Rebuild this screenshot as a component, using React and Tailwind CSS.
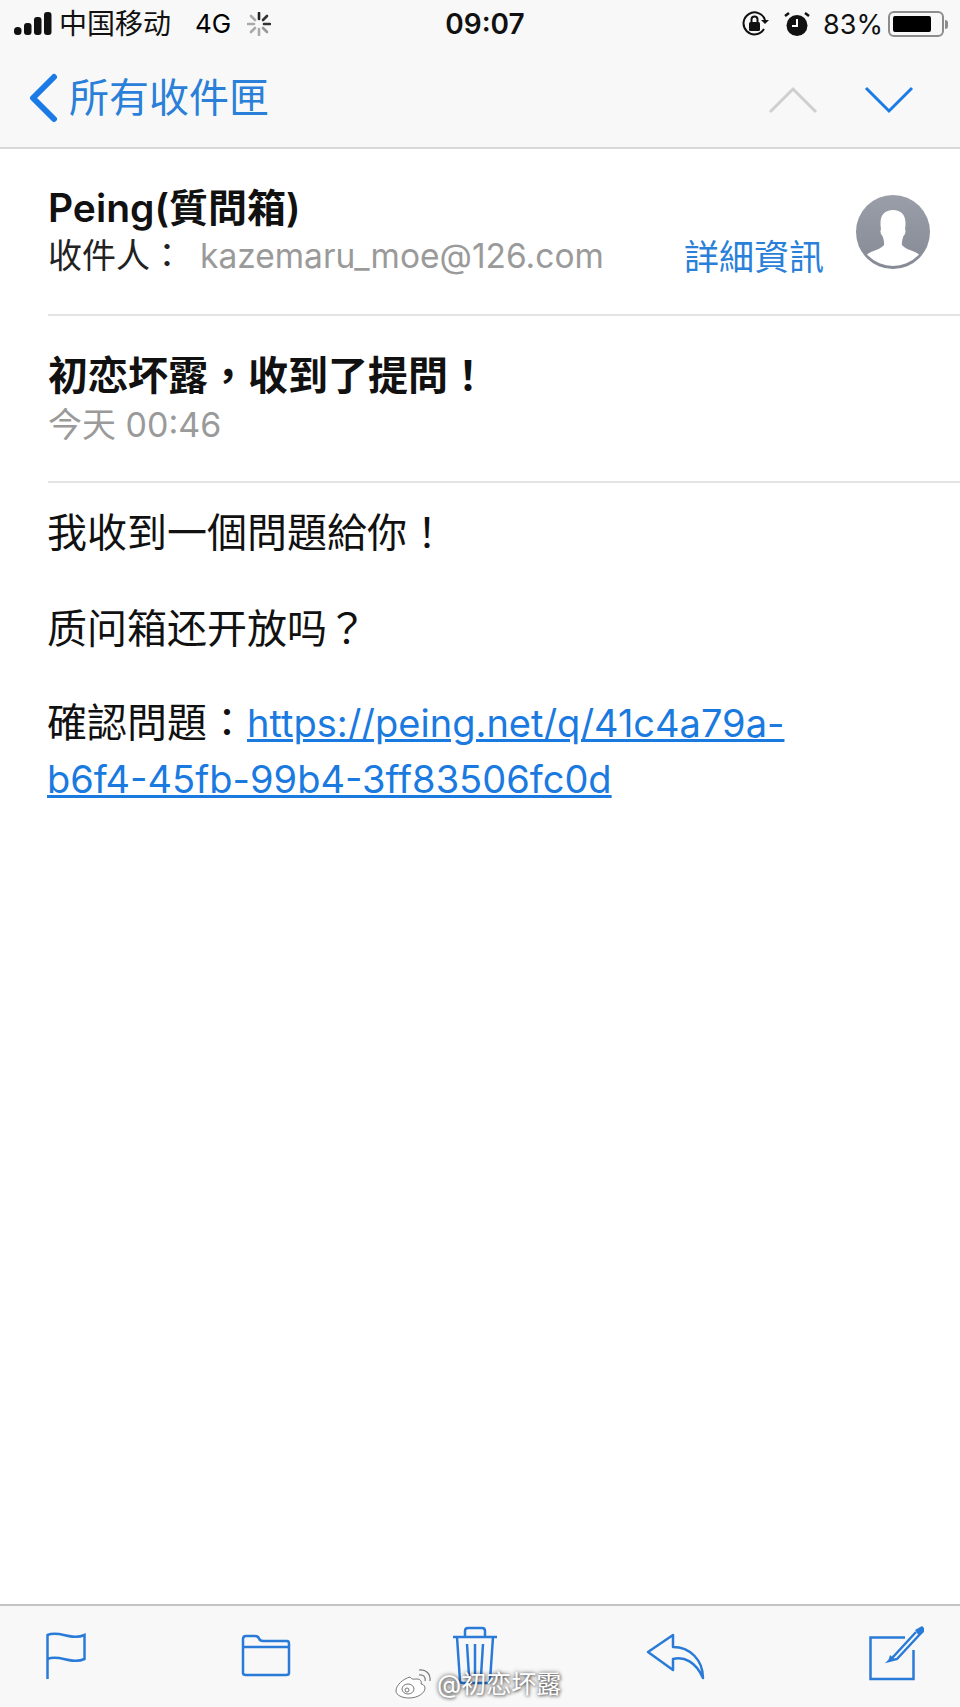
const sans = "font-['Inter','Noto_Sans_CJK_TC',sans-serif]";

function Signal() {
  return (
    <svg width="40" height="24" viewBox="0 0 40 24" className="shrink-0">
      <rect x="0" y="15" width="7.5" height="8" rx="3.5" fill="#111" />
      <rect x="10" y="11" width="7.5" height="12" rx="3" fill="#111" />
      <rect x="20" y="5" width="7.5" height="18" rx="3" fill="#111" />
      <rect x="30" y="0" width="7.5" height="23" rx="3" fill="#111" />
    </svg>
  );
}

function Spinner() {
  const lines = [
    [12, 1, 12, 7, '#222'],
    [20, 4, 16, 8, '#333'],
    [23, 12, 17, 12, '#333'],
    [20, 20, 16, 16, '#999'],
    [12, 23, 12, 17, '#aaa'],
    [4, 20, 8, 16, '#aaa'],
    [1, 12, 7, 12, '#aaa'],
    [4, 4, 8, 8, '#aaa'],
  ];
  return (
    <svg width="24" height="24" viewBox="0 0 24 24">
      {lines.map(([a, b, c, d, col], i) => (
        <line key={i} x1={a} y1={b} x2={c} y2={d} stroke={col} strokeWidth="2.6" strokeLinecap="round" />
      ))}
    </svg>
  );
}

function StatusBar() {
  return (
    <div className={`flex h-12 items-center pl-[14px] pr-3 text-black ${sans}`}>
      <div className="flex w-[430px] items-center">
        <Signal />
        <span className="ml-[5px] text-[28px] leading-none text-[#111]">中国移动</span>
        <span className="ml-[24px] text-[26px] leading-none">4G</span>
        <span className="ml-[16px] flex"><Spinner /></span>
      </div>
      <div className="w-[82px] text-center text-[28px] font-semibold leading-none text-[#111]">09:07</div>
      <div className="flex flex-1 items-center justify-end">
        <svg width="28" height="28" viewBox="0 0 28 28">
          <path d="M23 19a11 11 0 1 1 1-9" fill="none" stroke="#111" strokeWidth="2" />
          <path d="M20 10l4 4 4-4z" fill="#111" />
          <rect x="8" y="12" width="11" height="9" rx="1.5" fill="#111" />
          <path d="M10.5 12V9.5a3 3 0 0 1 6 0V12" fill="none" stroke="#111" strokeWidth="2" />
        </svg>
        <svg width="26" height="26" viewBox="0 0 26 26" className="ml-[15px]">
          <circle cx="13" cy="14.5" r="10.5" fill="#111" />
          <path d="M13 8v7H8" fill="none" stroke="#fff" strokeWidth="2" />
          <path d="M1 5l4-3M25 5l-4-3" stroke="#111" strokeWidth="2.5" />
        </svg>
        <span className="ml-[13px] text-[27px] leading-none text-[#111]">83%</span>
        <div className="ml-[5px] flex items-center">
          <div className="h-[26px] w-[56px] rounded-[6px] border-2 border-[#8c8c8c] p-[3px]">
            <div className="h-full w-[83%] rounded-[2px] bg-black" />
          </div>
          <div className="ml-[1px] h-[9px] w-[3px] rounded-r-full bg-[#8c8c8c]" />
        </div>
      </div>
    </div>
  );
}

function NavBar() {
  return (
    <div className="flex h-[101px] items-center justify-between border-b-2 border-[#d9d9d9] pl-[28px] pr-[46px]">
      <div className="flex items-center">
        <svg width="30" height="50" viewBox="0 0 30 50">
          <path d="M26 4L5 25l21 21" fill="none" stroke="#1a7ae6" strokeWidth="6" strokeLinecap="round" strokeLinejoin="round" />
        </svg>
        <span className="ml-[11px] text-[40px] leading-none text-[#2a7fd9]">所有收件匣</span>
      </div>
      <div className="flex items-center gap-[46px]">
        <svg width="50" height="28" viewBox="0 0 50 28" className="mt-1">
          <path d="M2 26L25 3l23 23" fill="none" stroke="#cfcfcf" strokeWidth="3" />
        </svg>
        <svg width="50" height="28" viewBox="0 0 50 28" className="mt-1">
          <path d="M2 2l23 23L48 2" fill="none" stroke="#1a7ae6" strokeWidth="3" />
        </svg>
      </div>
    </div>
  );
}

function Avatar() {
  return (
    <svg width="74" height="74" viewBox="0 0 74 74">
      <defs>
        <linearGradient id="av" x1="0" y1="0" x2="0" y2="1">
          <stop offset="0" stopColor="#9a9ea8" />
          <stop offset="1" stopColor="#858a95" />
        </linearGradient>
        <clipPath id="avc"><circle cx="37" cy="36" r="35" /></clipPath>
      </defs>
      <circle cx="37" cy="37" r="37" fill="url(#av)" />
      <path
        clipPath="url(#avc)"
        d="M37 15c-8 0-12.5 5-12.5 13 0 2 0 4 .5 6-1 2-.5 5 1.5 7 1 3 2 6 1.500 9-2 3-8 5-13 7-4 2-7 5-9 8l5 15h52l5-15c-2-3-5-6-9-8-5-2-11-4-13-7-.5-3 .5-6 1.500-9 2-2 2.500-5 1.500-7 .5-2 .5-4 .5-6 0-8-4.500-13-12.500-13z"
        fill="#fff"
      />
    </svg>
  );
}

function Header() {
  return (
    <div className="ml-[48px] flex h-[167px] items-start justify-between border-b-2 border-[#e4e4e4] pr-[30px]">
      <div className="pt-[34px]">
        <div className="text-[39px] font-semibold leading-[50px] text-[#111]">Peing(質問箱)</div>
        <div className="flex items-center text-[34px] leading-[46px]">
          <span className="w-[152px] text-[#222]">收件人：</span>
          <span className="text-[33.500px] text-[#9a9a9a]">kazemaru_moe@126.com</span>
        </div>
      </div>
      <div className="flex items-start">
        <span className="mt-[84px] text-[35px] leading-[48px] text-[#2a7fd9]">詳細資訊</span>
        <div className="ml-[32px] mt-[46px]"><Avatar /></div>
      </div>
    </div>
  );
}

function Subject() {
  return (
    <div className="ml-[48px] h-[167px] border-b-2 border-[#e4e4e4] pt-[34px]">
      <div className="text-[40px] font-bold leading-[52px] text-[#111]">初恋坏露，收到了提問！</div>
      <div className="text-[34px] leading-[46px] text-[#9a9a9a]">今天 00:46</div>
    </div>
  );
}

function Body() {
  return (
    <div className="px-[47px] pt-[26px] text-[40px] leading-[48px] text-[#111]">
      <p>我收到一個問題給你！</p>
      <p className="mt-[48px]">质问箱还开放吗？</p>
      <p className="mt-[42px] w-[760px] leading-[55px]">
        確認問題：<a className="text-[38px] text-[#1a7ae0] underline">https://peing.net/q/41c4a79a-b6f4-45fb-99b4-3ff83506fc0d</a>
      </p>
    </div>
  );
}

function Toolbar() {
  const blue = '#2a7bd8';
  return (
    <div className="relative flex h-[103px] items-start border-t-2 border-[#c4c4c4] bg-[#f8f8f8] pl-[46px]">
      <svg width="40" height="47" viewBox="0 0 40 47" className="mt-[26px]">
        <path d="M1.500 47V3c12-5 24 6 37 0v24c-13 6-25-5-37 0" fill="none" stroke={blue} strokeWidth="2.5" />
      </svg>
      <svg width="50" height="43" viewBox="0 0 50 43" className="ml-[155px] mt-[28px]">
        <path d="M2 13V5q0-3 3-3h9q3 0 4 2.500t4 2.500h24q2 0 2 3v29q0 2-3 2H5q-3 0-3-2zM2 13h46" fill="none" stroke={blue} strokeWidth="2.5" />
      </svg>
      <svg width="46" height="60" viewBox="0 0 46 60" className="ml-[161px] mt-[20px]">
        <path d="M1 11h44M5 11l3 44q0 2 3 2h24q3 0 3-2l3-44M13 11V5q0-3 3-3h14q3 0 3 3v6M15 18l2 32M23 18v32M31 18l-2 32" fill="none" stroke={blue} strokeWidth="2.5" />
      </svg>
      <svg width="60" height="48" viewBox="0 0 60 48" className="ml-[148px] mt-[26px]">
        <path d="M27 3L2 20l25 18V27C38 24 50 30 57 46 57 28 44 15 27 15z" fill="none" stroke={blue} strokeWidth="2.5" strokeLinejoin="round" />
      </svg>
      <svg width="56" height="56" viewBox="0 0 56 56" className="ml-[163px] mt-[20px]">
        <path d="M36 11.500H1.500v41.500h43V24" fill="none" stroke={blue} strokeWidth="2.5" />
        <path d="M47 6L25 30l-5 5 8-2 25-27" fill="none" stroke={blue} strokeWidth="2.5" />
        <path d="M46 4l7-4 2 2 0 4-5 4z" fill={blue} />
        <path d="M19 36l2-7 5 5z" fill={blue} />
      </svg>
      {/* weibo watermark */}
      <div className="absolute left-[395px] top-[63px] flex items-center">
        <svg width="36" height="30" viewBox="0 0 36 30">
          <path d="M15 8C8 10 1 16 1 22c0 4 6 7 13 7 9 0 16-5 16-10 0-3-3-4-4-4 1-3-1-5-4-5-3 0-5 1-7-2z" fill="#fff" stroke="#777" strokeWidth="1" />
          <ellipse cx="13" cy="20" rx="6" ry="5" fill="none" stroke="#777" strokeWidth="1" />
          <circle cx="12" cy="21" r="2" fill="none" stroke="#777" strokeWidth="1" />
          <path d="M24 6c4-1 7 2 6 6M24 1c7-1 12 4 11 11" fill="none" stroke="#777" strokeWidth="1.2" />
        </svg>
        <span className="ml-[6px] text-[25px] leading-none text-white [text-shadow:0_0_4px_rgba(0,0,0,0.7),1px_1px_3px_rgba(0,0,0,0.4)]">@初恋坏露</span>
      </div>
    </div>
  );
}

export default function App() {
  return (
    <div className={`flex h-[1707px] w-[960px] flex-col overflow-hidden bg-white ${sans}`}>
      <div className="bg-[#f8f8f8]">
        <StatusBar />
        <NavBar />
      </div>
      <Header />
      <Subject />
      <div className="flex-1"><Body /></div>
      <Toolbar />
    </div>
  );
}
